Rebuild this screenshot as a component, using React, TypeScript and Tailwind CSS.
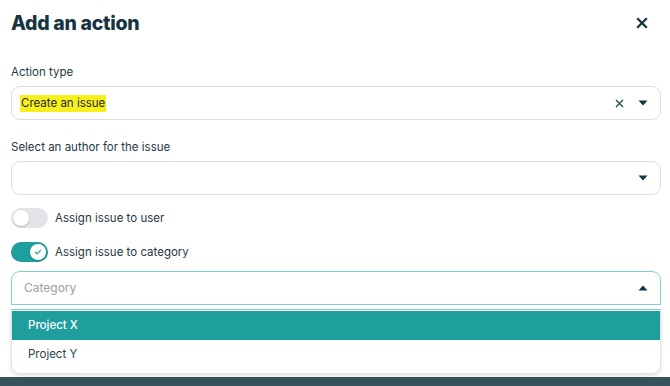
import { useState } from "react";

function Caret({ up = false }: { up?: boolean }) {
  return (
    <svg width="10" height="6" viewBox="0 0 10 6" className={up ? "rotate-180" : ""}>
      <path d="M0.5 0.5h9L5 5.5z" fill="#163440" />
    </svg>
  );
}

function Toggle({ on, label }: { on: boolean; label: string }) {
  return (
    <div className="flex items-center gap-[7px]">
      <div
        className={`relative h-[20px] w-[37px] rounded-full ${on ? "bg-[#1f9e9e]" : "bg-[#e3e4e8]"}`}
      >
        <div
          className={`absolute top-[2px] flex h-[16px] w-[16px] items-center justify-center rounded-full bg-white shadow-[0_1px_2px_rgba(0,0,0,0.2)] ${
            on ? "left-[19px]" : "left-[2px]"
          }`}
        >
          {on && (
            <svg width="8" height="8" viewBox="0 0 8 8">
              <path d="M1.5 4.2l1.7 1.6L6.5 2.3" stroke="#1f9e9e" strokeWidth="1.2" fill="none" strokeLinecap="round" />
            </svg>
          )}
        </div>
      </div>
      <span className="text-[11.5px] leading-[14px] text-[#24393f]">{label}</span>
    </div>
  );
}

export default function App() {
  const [selected] = useState("Project X");

  return (
    <div className="flex h-[386px] w-[670px] flex-col bg-white font-['Inter',sans-serif] text-[#24393f]">
      <div className="flex flex-1 flex-col pl-[11px] pr-[9px]">
        {/* header */}
        <div className="mt-[11px] flex h-[24px] items-center justify-between">
          <h1 className="text-[19.5px] font-extrabold leading-[24px] tracking-[-0.3px] text-[#163440]">Add an action</h1>
          <svg width="12" height="12" viewBox="0 0 12 12" className="mr-[13px]">
            <path d="M1.2 1.2l9.6 9.6M10.8 1.2l-9.6 9.6" stroke="#163440" strokeWidth="2.3" />
          </svg>
        </div>

        {/* action type */}
        <label className="mt-[30px] text-[11.5px] leading-[14px]">Action type</label>
        <div className="mt-[7px] flex h-[34px] items-center rounded-[9px] border border-[#dcdde3] pl-[8px] pr-[12px]">
          <span className="bg-[#f7f01c] px-[1px] py-[1px] text-[11.5px] leading-[15px] text-[#1d2a2f]">Create an issue</span>
          <div className="ml-auto flex items-center gap-[14px]">
            <svg width="9" height="9" viewBox="0 0 9 9">
              <path d="M1 1l7 7M8 1L1 8" stroke="#274a55" strokeWidth="1.3" />
            </svg>
            <Caret />
          </div>
        </div>

        {/* author */}
        <label className="mt-[20px] text-[11.5px] leading-[14px]">Select an author for the issue</label>
        <div className="mt-[7px] flex h-[34px] items-center justify-end rounded-[9px] border border-[#dcdde3] pr-[12px]">
          <Caret />
        </div>

        <div className="mt-[13px] flex flex-col gap-[14px]">
          <Toggle on={false} label="Assign issue to user" />
          <Toggle on label="Assign issue to category" />
        </div>

        {/* category select, open */}
        <div className="mt-[9px] flex h-[34px] items-center rounded-t-[9px] border border-[#7fcfcf] pl-[12px] pr-[12px]">
          <span className="text-[12px] text-[#9aa0a6]">Category</span>
          <div className="ml-auto">
            <Caret up />
          </div>
        </div>
        <div className="mt-[4px] overflow-hidden rounded-b-[9px] border border-[#e1e2e6] border-t-[#7fcfcf] pt-[1px] pb-[4px] shadow-[0_2px_4px_rgba(0,0,0,0.12)]">
          {["Project X", "Project Y"].map((p) => (
            <div
              key={p}
              className={`flex h-[29px] items-center pl-[16px] text-[11.5px] ${
                p === selected ? "bg-[#1f9e9e] font-medium text-white" : "text-[#2b3f46]"
              }`}
            >
              {p}
            </div>
          ))}
        </div>
      </div>
      <div className="h-[9px] bg-[#36535c]" />
    </div>
  );
}
